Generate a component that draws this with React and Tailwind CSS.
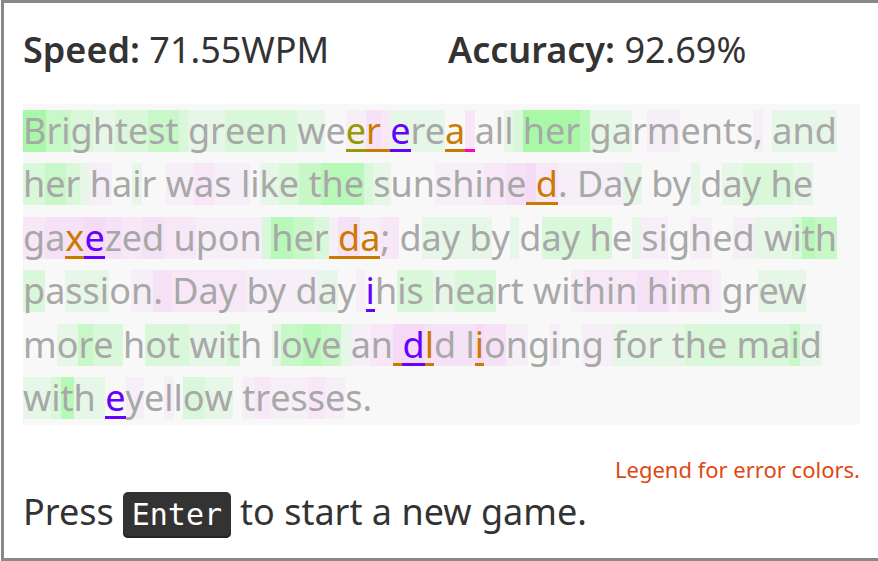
import React from "react";

// Typing-speed heat levels: g = faster than average, p = slower.
const HEAT = {
  n: "",
  g1: "bg-[#e6f6e7]",
  g2: "bg-[#d9f7d9]",
  g3: "bg-[#c8f7c8]",
  g4: "bg-[#b8f8b8]",
  g5: "bg-[#a8f8a8]",
  p1: "bg-[#f6eff7]",
  p2: "bg-[#f7e7f7]",
  p3: "bg-[#f5e2f6]",
  p4: "bg-[#f5dbf6]",
};

const ERROR = {
  orange: "border-b-3 border-[#cc7a00] text-[#cc7a00]",
  olive: "border-b-3 border-[#999900] text-[#999900]",
  violet: "border-b-3 border-[#6600ff] text-[#6600ff]",
  magenta: "border-b-3 border-[#ff00cc] text-[#ff00cc]",
};

const LINES = [
  [
    ["B", "g5"], ["ri", "g3"], ["g", "g2"], ["h", "g1"], ["te", "g2"], ["st", "g3"], [" ", "g2"],
    ["gr", "g1"], ["een ", "g2"], ["w", "g1"], ["e", "n"], ["e", "p1", "olive"], ["r", "p3", "orange"],
    [" ", "p2", "orange"], ["e", "g1", "violet"], ["re", "g1"], ["a", "n", "orange"], [" ", "p2", "magenta"],
    ["al", "n"], ["l", "g1"], [" ", "g2"], ["her", "g5"], [" ", "g4"], ["ga", "g1"], ["r", "n"],
    ["m", "p1"], ["ents", "n"], [",", "p1"], [" ", "n"], ["and", "g1"],
  ],
  [
    ["h", "g2"], ["e", "g3"], ["r", "g2"], [" ", "g1"], ["h", "p1"], ["a", "n"], ["i", "g1"], ["r ", "n"],
    ["w", "p1"], ["a", "p2"], ["s l", "p1"], ["i", "n"], ["k", "g1"], ["e", "g2"], [" t", "g3"], ["he", "g4"],
    [" ", "g2"], ["s", "g1"], ["un", "n"], ["shi", "p1"], ["n", "p2"], ["e", "p3"], [" ", "p4", "orange"],
    ["d", "p2", "orange"], [". Da", "p1"], ["y", "g1"], [" by", "n"], [" ", "g1"], ["d", "n"], ["a", "g1"],
    ["y h", "g2"], ["e", "g1"],
  ],
  [
    ["g", "p2"], ["a", "p3"], ["x", "p3", "orange"], ["e", "p4", "violet"], ["z", "p3"], ["e", "p2"],
    ["d", "p3"], [" u", "p2"], ["pon", "p1"], [" ", "g2"], ["h", "g4"], ["e", "g3"], ["r", "g2"],
    [" ", "p1", "orange"], ["d", "p3", "orange"], ["a", "p1", "orange"], ["; ", "p2"], ["d", "n"],
    ["ay b", "g1"], ["y", "n"], [" ", "g1"], ["d", "n"], ["ay h", "g2"], ["e", "n"], [" ", "g1"],
    ["si", "p1"], ["g", "n"], ["h", "p1"], ["e", "n"], ["d", "p1"], [" w", "g1"], ["i", "g2"], ["t", "g4"],
    ["h", "g3"],
  ],
  [
    ["p", "g2"], ["a", "n"], ["ssi", "g1"], ["o", "n"], ["n", "p1"], [". ", "p3"], ["Day ", "p2"],
    ["by d", "p1"], ["a", "g1"], ["y", "n"], [" ", "p1"], ["i", "n", "violet"], ["h", "n"], ["is ", "g2"],
    ["h", "g1"], ["ea", "g2"], ["rt wi", "n"], ["t", "p1"], ["hin", "p2"], [" h", "p3"], ["i", "p1"],
    ["m", "p2"], [" ", "p1"], ["gr", "n"], ["ew", "g1"],
  ],
  [
    ["m", "n"], ["o", "g1"], ["r", "g3"], ["e ", "g2"], ["h", "n"], ["ot ", "g2"], ["wi", "g1"], ["t", "g2"],
    ["h ", "n"], ["l", "g1"], ["o", "g3"], ["v", "g4"], ["e", "g3"], [" ", "g1"], ["a", "p1"], ["n", "p2"],
    [" ", "p4", "orange"], ["d", "p4", "violet"], ["l", "p3", "orange"], ["d ", "p3"], ["l", "p3"],
    ["i", "p4", "orange"], ["o", "p3"], ["n", "p1"], ["g", "n"], ["i", "p1"], ["n", "n"], ["g ", "p1"],
    ["for t", "g1"], ["he ma", "g2"], ["i", "g3"], ["d", "g1"],
  ],
  [
    ["w", "g1"], ["i", "g2"], ["t", "g4"], ["h ", "g1"], ["e", "n", "violet"], ["y", "p1"], ["e", "n"],
    ["l", "p1"], ["l", "n"], ["o", "g2"], ["w", "g1"], [" ", "n"], ["t", "p1"], ["r", "p2"], ["es", "p1"],
    ["s", "p2"], ["e", "p1"], ["s.", "n"],
  ],
];

function Line({ runs }) {
  return (
    <div className="flex items-center whitespace-pre">
      {runs.map(([text, heat, error], i) => (
        <span key={i} className={`block h-[42px] leading-[42px] ${HEAT[heat]} ${error ? ERROR[error] : ""}`}>
          {text}
        </span>
      ))}
    </div>
  );
}

export default function App() {
  return (
    <div className="bg-white pl-px">
      <main className="border-y-3 border-l-3 border-[#888888] pt-5 pr-[18px] pb-5 pl-[19px] font-['Noto_Sans',sans-serif] text-[36px] text-[#333333]">
        <div className="grid grid-cols-2 gap-x-[13px] leading-[54px]">
          <p>
            <strong className="font-semibold">Speed:</strong> 71.55WPM
          </p>
          <p>
            <strong className="font-semibold">Accuracy:</strong> 92.69%
          </p>
        </div>
        <div className="mt-[27px] grid min-h-[321px] auto-rows-fr bg-[#f8f8f8] text-[#a8a8a8]">
          {LINES.map((runs, i) => (
            <Line key={i} runs={runs} />
          ))}
        </div>
        <div className="mt-[27px] text-right text-[22px] leading-[34px]">
          <a href="#legend" className="block text-[#dd4814]">
            Legend for error colors.
          </a>
        </div>
        <p className="flex items-baseline gap-[9px] leading-[52px]">
          <span>Press</span>
          <kbd className="rounded-[5px] bg-[#333333] px-[9px] font-['DejaVu_Sans_Mono',monospace] text-[30px] leading-[46px] text-white shadow-[inset_0_-2px_0_#252525]">
            Enter
          </kbd>
          <span>to start a new game.</span>
        </p>
      </main>
    </div>
  );
}
